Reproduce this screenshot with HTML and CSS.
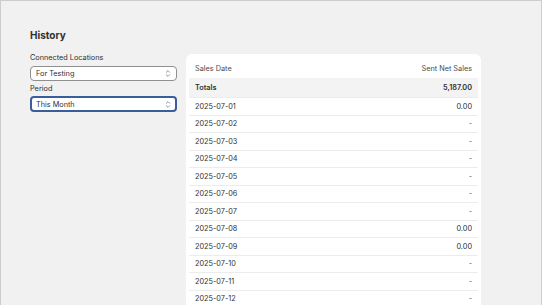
FILE: index.html
```html
<!DOCTYPE html>
<html lang="en">
<head>
<meta charset="utf-8">
<title>History</title>
<link rel="stylesheet" href="styles.css">
</head>
<body>
<div class="frame">
  <div class="page">
    <div class="side">
      <h1 class="title">History</h1>
      <div class="field">
        <div class="label">Connected Locations</div>
        <div class="select">
          <span>For Testing</span>
          <svg class="chev" viewBox="0 0 6 9" width="6" height="9"><path d="M1.3 3.3 L3 1.6 L4.7 3.3 M1.3 5.7 L3 7.4 L4.7 5.7" fill="none" stroke="#8a8a8a" stroke-width="0.9" stroke-linecap="round" stroke-linejoin="round"/></svg>
        </div>
      </div>
      <div class="field">
        <div class="label">Period</div>
        <div class="select focused">
          <span>This Month</span>
          <svg class="chev" viewBox="0 0 6 9" width="6" height="9"><path d="M1.3 3.3 L3 1.6 L4.7 3.3 M1.3 5.7 L3 7.4 L4.7 5.7" fill="none" stroke="#8a8a8a" stroke-width="0.9" stroke-linecap="round" stroke-linejoin="round"/></svg>
        </div>
      </div>
    </div>
    <div class="card">
      <div class="row head"><span>Sales Date</span><span>Sent Net Sales</span></div>
      <div class="row totals"><span>Totals</span><span>5,187.00</span></div>
      <div class="row"><span>2025-07-01</span><span>0.00</span></div>
      <div class="row"><span>2025-07-02</span><span class="dash">-</span></div>
      <div class="row"><span>2025-07-03</span><span class="dash">-</span></div>
      <div class="row"><span>2025-07-04</span><span class="dash">-</span></div>
      <div class="row"><span>2025-07-05</span><span class="dash">-</span></div>
      <div class="row"><span>2025-07-06</span><span class="dash">-</span></div>
      <div class="row"><span>2025-07-07</span><span class="dash">-</span></div>
      <div class="row"><span>2025-07-08</span><span>0.00</span></div>
      <div class="row"><span>2025-07-09</span><span>0.00</span></div>
      <div class="row"><span>2025-07-10</span><span class="dash">-</span></div>
      <div class="row"><span>2025-07-11</span><span class="dash">-</span></div>
      <div class="row"><span>2025-07-12</span><span class="dash">-</span></div>
    </div>
  </div>
</div>
</body>
</html>
```

FILE: styles.css
```css
* { box-sizing: border-box; }
html, body { margin: 0; padding: 0; }
body {
  width: 542px;
  height: 305px;
  overflow: hidden;
  background: #f1f1f1;
  font-family: Inter, "Noto Sans", sans-serif;
  color: #303030;
}
.frame {
  height: 305px;
  border: 1px solid #cdcdcd;
  border-bottom: none;
  overflow: hidden;
}
.page {
  display: flex;
  align-items: flex-start;
  gap: 9px;
  padding: 28px 0 0 29px;
}
.side {
  width: 147px;
  display: flex;
  flex-direction: column;
}
.title {
  margin: 0 0 12px;
  font-size: 10px;
  line-height: 12px;
  font-weight: 700;
  color: #303030;
}
.label {
  font-size: 7.3px;
  line-height: 10px;
  color: #303030;
  margin-bottom: 3px;
}
.field + .field { margin-top: 3px; }
.select {
  height: 15px;
  border: 1px solid #8f8f8f;
  border-radius: 4px;
  background: #fff;
  display: flex;
  align-items: center;
  justify-content: space-between;
  padding: 0 5px 0 5px;
  font-size: 7.3px;
  color: #303030;
}
.field + .field .label { margin-bottom: 2px; }
.select.focused {
  height: 16px;
  border: 2px solid #3a5e9a;
  padding-left: 4px;
  padding-right: 4px;
}
.chev { display: block; }
.card {
  margin-top: 25px;
  width: 295px;
  background: #fff;
  border-radius: 6px;
  padding: 4px 3px 0;
  height: 300px;
}
.row {
  display: flex;
  justify-content: space-between;
  align-items: center;
  height: 17.5px;
  padding: 0 6px;
  border-top: 1px solid #ececec;
  font-size: 7.3px;
  color: #303030;
}
.row.head {
  height: 20px;
  border-top: none;
  color: #4a4a4a;
}
.row.totals {
  height: 19px;
  border-top: none;
  background: #f3f3f3;
  font-weight: 600;
}
.dash { color: #616161; }
```
